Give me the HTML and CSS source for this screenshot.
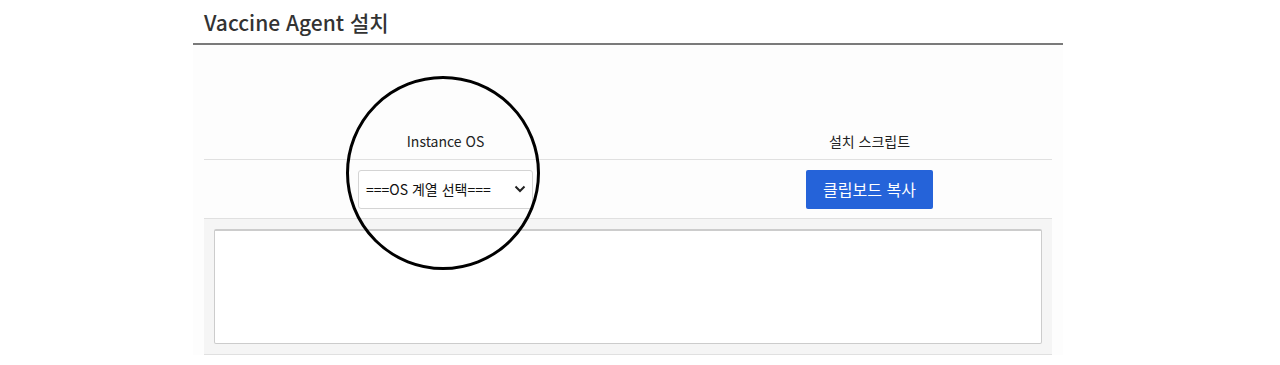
FILE: index.html
```html
<!DOCTYPE html>
<html lang="ko">
<head>
  <meta charset="UTF-8" />
  <title>Vaccine Agent 설치</title>
  <link rel="stylesheet" href="styles.css">
</head>
<body>

<div class="wrap">
  <h2 class="title">Vaccine Agent 설치</h2>

  <div class="panel">
    <div class="row head">
      <div class="col-os">Instance OS</div>
      <div class="col-script">설치 스크립트</div>
    </div>
    <div class="row controls">
      <div class="col-os">
        <div class="select">
          <span>===OS 계열 선택===</span>
          <svg width="12" height="8" viewBox="0 0 12 8"><path d="M1.5 1.5 6 6l4.5-4.5" fill="none" stroke="#222" stroke-width="2"/></svg>
        </div>
      </div>
      <div class="col-script">
        <button class="copy">클립보드 복사</button>
      </div>
    </div>
    <div class="script-box">
      <textarea></textarea>
    </div>

    <!-- highlight ring drawn over the screenshot -->
    <div class="ring"></div>
  </div>
</div>

</body>
</html>
```

FILE: styles.css
```css
body {
  margin: 0;
  background: #fff;
  font-family: "Noto Sans CJK KR", "Noto Sans", sans-serif;
  color: #222;
}

.wrap {
  width: 870px;
  margin-left: 193px;
}

.title {
  margin: 0;
  height: 43px;
  padding-left: 11px;
  font-size: 21px;
  font-weight: 500;
  line-height: 45px;
  color: #333;
  border-bottom: 2px solid #7a7a7a;
}

.panel {
  position: relative;
  background: #fdfdfd;
  padding: 0 11px 12px;
  height: 310px;
  box-sizing: border-box;
}

.row {
  display: flex;
  border-bottom: 1px solid #e0e0e0;
}

.col-os {
  width: 483px;
  display: flex;
  justify-content: center;
}

.col-script {
  flex: 1;
  display: flex;
  justify-content: center;
}

.head {
  padding-top: 84px;
  height: 30px;
  font-size: 14px;
  line-height: 24px;
}

.controls {
  height: 58px;
  align-items: center;
}

.select {
  width: 175px;
  height: 39px;
  box-sizing: border-box;
  border: 1px solid #d4d4d4;
  border-radius: 3px;
  background: #fff;
  display: flex;
  align-items: center;
  justify-content: space-between;
  padding: 0 6px 0 7px;
  font-size: 14px;
  color: #111;
}

.copy {
  width: 127px;
  height: 39px;
  border: none;
  border-radius: 2px;
  background: #2563d9;
  color: #fff;
  font-family: inherit;
  font-size: 16px;
  cursor: pointer;
}

.script-box {
  background: #f5f5f5;
  padding: 10px 10px 10px;
  border-bottom: 1px solid #e0e0e0;
}

.script-box textarea {
  display: block;
  width: 100%;
  height: 115px;
  box-sizing: border-box;
  border: 1px solid #ccc;
  border-top-width: 2px;
  border-radius: 2px;
  background: #fff;
  resize: none;
  margin: 0;
}

.ring {
  position: absolute;
  left: 153px;
  top: 31px;
  width: 188px;
  height: 188px;
  border: 3px solid #000;
  border-radius: 50%;
}
```
